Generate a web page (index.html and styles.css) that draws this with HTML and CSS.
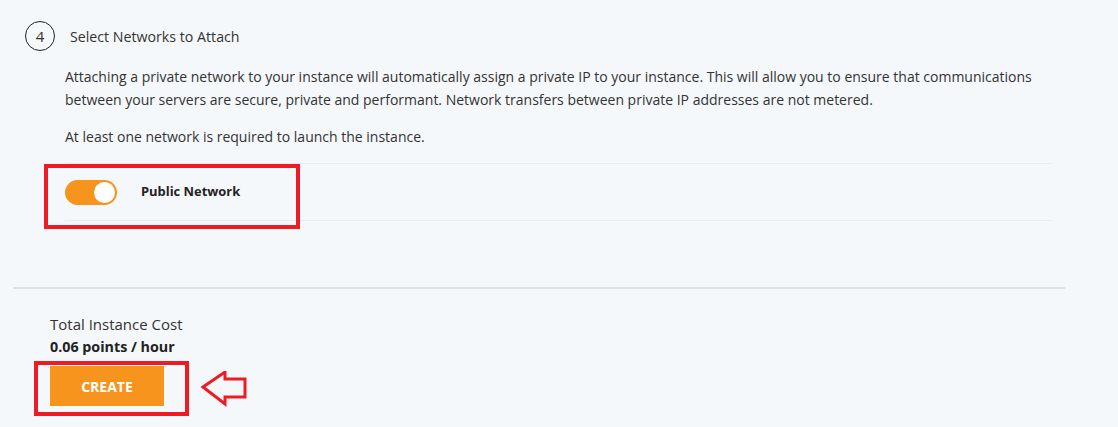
FILE: index.html
```html
<!DOCTYPE html>
<html lang="en">
<head>
    <meta charset="UTF-8">
    <meta name="viewport" content="width=device-width, initial-scale=1.0">
    <title>Create Instance</title>
    <link rel="stylesheet" href="styles.css">
</head>
<body>
    <div class="step">
        <div class="step-header">
            <span class="step-number">4</span>
            <span class="step-title">Select Networks to Attach</span>
        </div>
        <div class="step-body">
            <p>Attaching a private network to your instance will automatically assign a private IP to your instance. This will allow you to ensure that communications between your servers are secure, private and performant. Network transfers between private IP addresses are not metered.</p>
            <p>At least one network is required to launch the instance.</p>
            <div class="network-list">
                <div class="network-row">
                    <label class="toggle">
                        <span class="toggle-knob"></span>
                    </label>
                    <span class="network-name">Public Network</span>
                    <div class="mark mark-network"></div>
                </div>
            </div>
        </div>
    </div>

    <div class="summary">
        <div class="cost-label">Total Instance Cost</div>
        <div class="cost-value">0.06 points / hour</div>
        <div class="create-wrap">
            <button class="create-btn">CREATE</button>
            <div class="mark mark-create"></div>
            <svg class="mark-arrow" width="48" height="38" viewBox="0 0 48 38">
                <path d="M3 16 L25 1 L25 8 L45 8 L45 26 L25 26 L25 33 Z" fill="none" stroke="#ed1c24" stroke-width="3" stroke-linejoin="miter"/>
            </svg>
        </div>
    </div>
</body>
</html>
```

FILE: styles.css
```css
body {
    font-family: "Open Sans", Arial, sans-serif;
    margin: 0;
    padding: 0;
    background-color: #f5f8fa;
    color: #333;
}
.step {
    padding: 21px 0 0 25px;
}
.step-header {
    display: flex;
    align-items: center;
}
.step-number {
    width: 28px;
    height: 28px;
    border: 1px solid #222;
    border-radius: 50%;
    display: flex;
    align-items: center;
    justify-content: center;
    font-size: 15px;
}
.step-title {
    margin-left: 15px;
    font-size: 14.2px;
}
.step-body {
    padding: 0 65px 0 40px;
    margin-top: 14px;
}
.step-body p {
    font-size: 14px;
    line-height: 23px;
    margin: 0 0 14px;
}
.network-list {
    margin-top: 15px;
    border-top: 1px solid #e9edf0;
    border-bottom: 1px solid #e9edf0;
}
.network-row {
    position: relative;
    display: flex;
    align-items: center;
    height: 56px;
}
.toggle {
    position: relative;
    width: 52px;
    height: 25px;
    border-radius: 13px;
    background-color: #f7941d;
}
.toggle-knob {
    position: absolute;
    right: 2px;
    top: 2px;
    width: 21px;
    height: 21px;
    border-radius: 50%;
    background-color: #fff;
}
.network-name {
    margin-left: 24px;
    margin-bottom: 2px;
    font-size: 12.9px;
    font-weight: bold;
    color: #222;
}
.mark {
    position: absolute;
    border: 4px solid #ed1c24;
}
.mark-network {
    left: -21px;
    top: 0;
    width: 248px;
    height: 57px;
}
.summary {
    margin: 66px 53px 0 13px;
    border-top: 2px solid #dde1e4;
    padding: 25px 0 40px 37px;
}
.cost-label {
    font-size: 15px;
    color: #333;
}
.cost-value {
    font-size: 14.3px;
    font-weight: bold;
    color: #222;
    margin-top: 3px;
}
.create-wrap {
    position: relative;
    margin-top: 10px;
}
.create-btn {
    display: block;
    width: 114px;
    height: 40px;
    border: none;
    background-color: #f7941d;
    color: #fff;
    font-family: "Open Sans", Arial, sans-serif;
    font-size: 14px;
    font-weight: bold;
    cursor: pointer;
}
.mark-create {
    left: -16px;
    top: -5px;
    width: 147px;
    height: 47px;
}
.mark-arrow {
    position: absolute;
    left: 150px;
    top: 5px;
}
```
